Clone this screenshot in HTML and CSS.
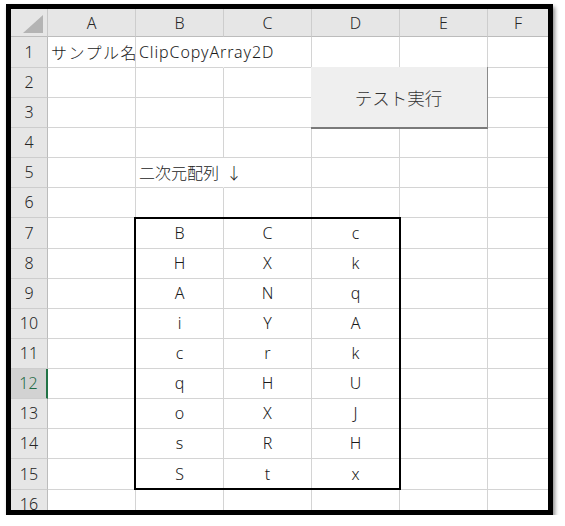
FILE: index.html
```html
<!DOCTYPE html>
<html lang="ja">
<head>
<meta charset="utf-8">
<title>Sheet</title>
<link rel="stylesheet" href="styles.css">
</head>
<body>
<div class="frame">
  <div class="wrap">
    <div class="sheet">
      <div class="corner"><svg width="36" height="27" viewBox="0 0 36 27"><polygon points="32,6 32,24 12,24" fill="#b4b4b4"/></svg></div>
      <div class="ch">A</div><div class="ch">B</div><div class="ch">C</div><div class="ch">D</div><div class="ch">E</div><div class="ch last">F</div>

      <div class="rh">1</div><div class="c txt clip jp">サンプル名</div><div class="c txt novr lat">ClipCopyArray2D</div><div class="c"></div><div class="c"></div><div class="c"></div><div class="c last"></div>
      <div class="rh">2</div><div class="c"></div><div class="c"></div><div class="c"></div><div class="c"></div><div class="c"></div><div class="c last"></div>
      <div class="rh">3</div><div class="c"></div><div class="c"></div><div class="c"></div><div class="c"></div><div class="c"></div><div class="c last"></div>
      <div class="rh">4</div><div class="c"></div><div class="c"></div><div class="c"></div><div class="c"></div><div class="c"></div><div class="c last"></div>
      <div class="rh">5</div><div class="c"></div><div class="c txt novr">二次元配列<span class="arrow">↓</span></div><div class="c"></div><div class="c"></div><div class="c"></div><div class="c last"></div>
      <div class="rh">6</div><div class="c"></div><div class="c"></div><div class="c"></div><div class="c"></div><div class="c"></div><div class="c last"></div>
      <div class="rh">7</div><div class="c"></div><div class="c mid">B</div><div class="c mid">C</div><div class="c mid">c</div><div class="c"></div><div class="c last"></div>
      <div class="rh">8</div><div class="c"></div><div class="c mid">H</div><div class="c mid">X</div><div class="c mid">k</div><div class="c"></div><div class="c last"></div>
      <div class="rh">9</div><div class="c"></div><div class="c mid">A</div><div class="c mid">N</div><div class="c mid">q</div><div class="c"></div><div class="c last"></div>
      <div class="rh">10</div><div class="c"></div><div class="c mid">i</div><div class="c mid">Y</div><div class="c mid">A</div><div class="c"></div><div class="c last"></div>
      <div class="rh">11</div><div class="c"></div><div class="c mid">c</div><div class="c mid">r</div><div class="c mid">k</div><div class="c"></div><div class="c last"></div>
      <div class="rh sel">12</div><div class="c"></div><div class="c mid">q</div><div class="c mid">H</div><div class="c mid">U</div><div class="c"></div><div class="c last"></div>
      <div class="rh">13</div><div class="c"></div><div class="c mid">o</div><div class="c mid">X</div><div class="c mid">J</div><div class="c"></div><div class="c last"></div>
      <div class="rh">14</div><div class="c"></div><div class="c mid">s</div><div class="c mid">R</div><div class="c mid">H</div><div class="c"></div><div class="c last"></div>
      <div class="rh">15</div><div class="c"></div><div class="c mid">S</div><div class="c mid">t</div><div class="c mid">x</div><div class="c"></div><div class="c last"></div>
      <div class="rh">16</div><div class="c"></div><div class="c"></div><div class="c"></div><div class="c"></div><div class="c"></div><div class="c last"></div>
    </div>
    <div class="overlay">
      <div class="button">テスト実行</div>
      <div class="range"></div>
    </div>
  </div>
</div>
</body>
</html>
```

FILE: styles.css
```css
html, body {
  margin: 0;
  padding: 0;
  background: #ffffff;
}

.frame {
  margin: 4px 0 0 6px;
  width: 547px;
  height: 511px;
  box-sizing: border-box;
  border: 5px solid #000;
  overflow: hidden;
  background: #fff;
  box-shadow: 2px 3px 4px rgba(0, 0, 0, 0.45);
}

.wrap {
  display: grid;
}

.sheet,
.overlay {
  grid-area: 1 / 1;
  display: grid;
  grid-template-columns: 37px 88px 88px 88px 88px 88px 60px;
  grid-template-rows: 28px 31px 30px 30px 30px 30px 30px 31px 30px 30px 30px 30px 30px 30px 30px 31px 30px;
}

.sheet {
  font-family: "Noto Sans", "Noto Sans CJK JP", sans-serif;
  font-size: 16px;
  font-weight: 300;
  color: #1a1a1a;
}

.corner,
.ch,
.rh,
.c {
  box-sizing: border-box;
  min-width: 0;
  display: flex;
  align-items: center;
  white-space: nowrap;
}

.corner {
  background: #e6e6e6;
  border-right: 1px solid #c8c8c8;
  border-bottom: 1px solid #bcbcbc;
}

.corner svg {
  display: block;
}

.ch {
  background: #e6e6e6;
  border-right: 1px solid #cdcdcd;
  border-bottom: 1px solid #bcbcbc;
  justify-content: center;
  color: #262626;
  padding-top: 1px;
}

.rh {
  background: #e6e6e6;
  border-right: 1px solid #bcbcbc;
  border-bottom: 1px solid #cdcdcd;
  justify-content: center;
  color: #262626;
  padding-bottom: 1px;
}

.rh.sel {
  background: #d2d2d2;
  color: #1f6b45;
  border-right: 2px solid #217346;
}

.c {
  background: #fff;
  border-right: 1px solid #d4d4d4;
  border-bottom: 1px solid #d4d4d4;
}

.ch.last,
.c.last {
  border-right: none;
}

.txt {
  padding-left: 3px;
  padding-bottom: 1px;
}

.jp {
  letter-spacing: 1.5px;
}

.lat {
  letter-spacing: 0.9px;
}

.arrow {
  margin-left: 7px;
}

.clip {
  overflow: hidden;
}

.novr {
  border-right-color: transparent;
  overflow: visible;
  position: relative;
  z-index: 1;
}

.mid {
  justify-content: center;
  padding-bottom: 1px;
}

.overlay {
  pointer-events: none;
}

.button {
  grid-column: 5 / 7;
  grid-row: 3 / 5;
  margin: -1px 0 -1px -1px;
  background: #efefef;
  border-right: 1px solid #8a8a8a;
  border-bottom: 2px solid #7a7a7a;
  display: flex;
  align-items: center;
  justify-content: center;
  font-family: "Noto Sans CJK JP", sans-serif;
  font-size: 17.5px;
  font-weight: 300;
  color: #333;
  padding-right: 1px;
}

.range {
  grid-column: 3 / 6;
  grid-row: 8 / 17;
  margin: -1px -1px 0 -2px;
  border: 2px solid #000;
}
```
